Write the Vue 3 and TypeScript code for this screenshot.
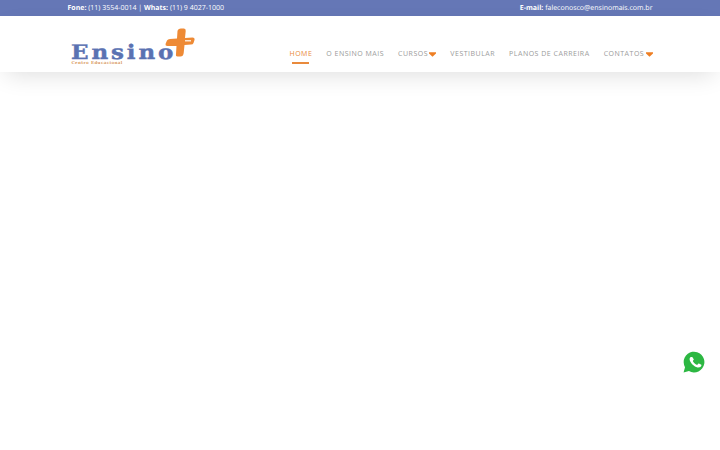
<template>
  <div class="page">
    <div class="topbar">
      <div class="container topbar-row">
        <span><b>Fone:</b> (11) 3554-0014 | <b>Whats:</b> (11) 9 4027-1000</span>
        <span><b>E-mail:</b> faleconosco@ensinomais.com.br</span>
      </div>
    </div>
    <header class="header">
      <div class="container header-row">
        <a class="logo">
          <div class="logo-text">
            <span class="logo-name">Ensino</span>
            <span class="logo-sub">Centro Educacional</span>
          </div>
          <svg class="logo-plus" width="30" height="31" viewBox="0 0 30 31">
            <path d="M12.5 3 Q13 0.5 16 0.5 L19 0.5 Q21 0.5 20.7 3 L20 10 L27.5 9.5 Q30 9.5 29.5 12 L28.5 15 Q28 16.5 26 16.5 L19.5 17 L18.7 25 Q18.2 28.5 15.5 28.5 L12.5 28.5 Q10.5 28.5 11 26 L11.5 18 L2.5 18 Q0 18 0.7 15.5 L2 12.5 Q2.7 11 5 11 L12 10.5 Z" fill="#ee8a35" />
            <rect x="20" y="12" width="6" height="1.5" fill="#fbe6d2" />
          </svg>
        </a>
        <nav class="nav">
          <a v-for="item in menu" :key="item.label" class="nav-item" :class="{ active: item.active }">
            {{ item.label }}
            <svg v-if="item.caret" class="caret" width="7" height="5" viewBox="0 0 7 5">
              <path d="M0 0.3 H7 V1.4 L3.5 4.8 L0 1.4 Z" fill="#ee7f24" />
            </svg>
          </a>
        </nav>
      </div>
    </header>
    <a class="whats">
      <svg width="22" height="22" viewBox="0 0 24 24">
        <path d="M0.6 23.4 L2.2 17.6 A11.3 11.3 0 1 1 6.5 21.9 Z" fill="#2cb742" />
        <path d="M8.6 6.6 C8.2 6.6 7.2 7.4 7.2 9 C7.2 10.6 8.4 12.3 8.6 12.6 C8.8 12.9 11 16.2 14.3 17.4 C16.8 18.3 17.4 17.9 18 17.8 C18.6 17.7 19.9 16.9 20 16 C20.1 15.5 20.1 15 20 14.9 L17.4 13.6 C17.1 13.5 16.9 13.5 16.7 13.8 L15.6 15 C15.4 15.2 15.2 15.3 14.9 15.1 C13.6 14.6 11.9 13.4 10.8 11.3 C10.6 10.9 11 10.7 11.7 9.6 C11.8 9.4 11.8 9.2 11.7 9 L10.5 7.1 C10.2 6.6 9.9 6.6 9.6 6.6 Z" fill="#fff" />
      </svg>
    </a>
  </div>
</template>

<script setup lang="ts">
interface MenuItem {
  label: string;
  active?: boolean;
  caret?: boolean;
}

const menu: MenuItem[] = [
  { label: "HOME", active: true },
  { label: "O ENSINO MAIS" },
  { label: "CURSOS", caret: true },
  { label: "VESTIBULAR" },
  { label: "PLANOS DE CARREIRA" },
  { label: "CONTATOS", caret: true },
];
</script>

<style>
html, body { margin: 0; background: #fff; }
</style>

<style scoped>
.page {
  height: 450px; position: relative; overflow: hidden; background: #fff;
  font-family: "Open Sans", "Liberation Sans", sans-serif;
  text-rendering: geometricPrecision;
}
.container { width: 585px; margin: 0 auto; }

.topbar { height: 16px; background: #6577b6; color: #fff; font-size: 7px; line-height: 18px; }
.topbar-row { display: flex; justify-content: space-between; }
.topbar b { font-weight: 700; }

.header { height: 56px; background: #fff; box-shadow: 0 8px 24px -6px rgba(0, 0, 0, 0.14); position: relative; }
.header-row { display: flex; justify-content: space-between; height: 100%; }

.logo { display: flex; align-items: flex-start; padding: 12px 0 0 4px; }
.logo-text { display: flex; flex-direction: column; width: 93px; margin-top: 15px; }
.logo-name {
  font-family: "DejaVu Serif", "Liberation Serif", serif; font-weight: 700; font-size: 20px; line-height: 19px;
  letter-spacing: 2.5px; color: #5a72b2; -webkit-text-stroke: 0.4px #5a72b2;
  margin-left: -1px; transform: scaleX(1.15); transform-origin: left; white-space: nowrap;
}
.logo-sub {
  font-family: "DejaVu Serif", serif; font-weight: 700; font-size: 4px; line-height: 5px; letter-spacing: 0.4px;
  color: #d99a5e; white-space: nowrap; margin-top: -2px;
}
.logo-plus { flex: none; }

.nav { display: flex; gap: 14px; padding-top: 33px; }
.nav-item {
  position: relative; height: 12px; font-size: 7px; line-height: 12px; letter-spacing: 0.5px; color: #999;
  white-space: nowrap;
}
.nav-item.active { color: #e98a3c; }
.nav-item.active::after {
  content: ""; position: absolute; left: 3px; right: 3px; top: 13px; height: 1.5px; background: #e98a3c;
}
.caret { margin-left: -1px; vertical-align: -0.5px; }

.whats { position: absolute; left: 683px; top: 351px; width: 22px; height: 22px; }
</style>
